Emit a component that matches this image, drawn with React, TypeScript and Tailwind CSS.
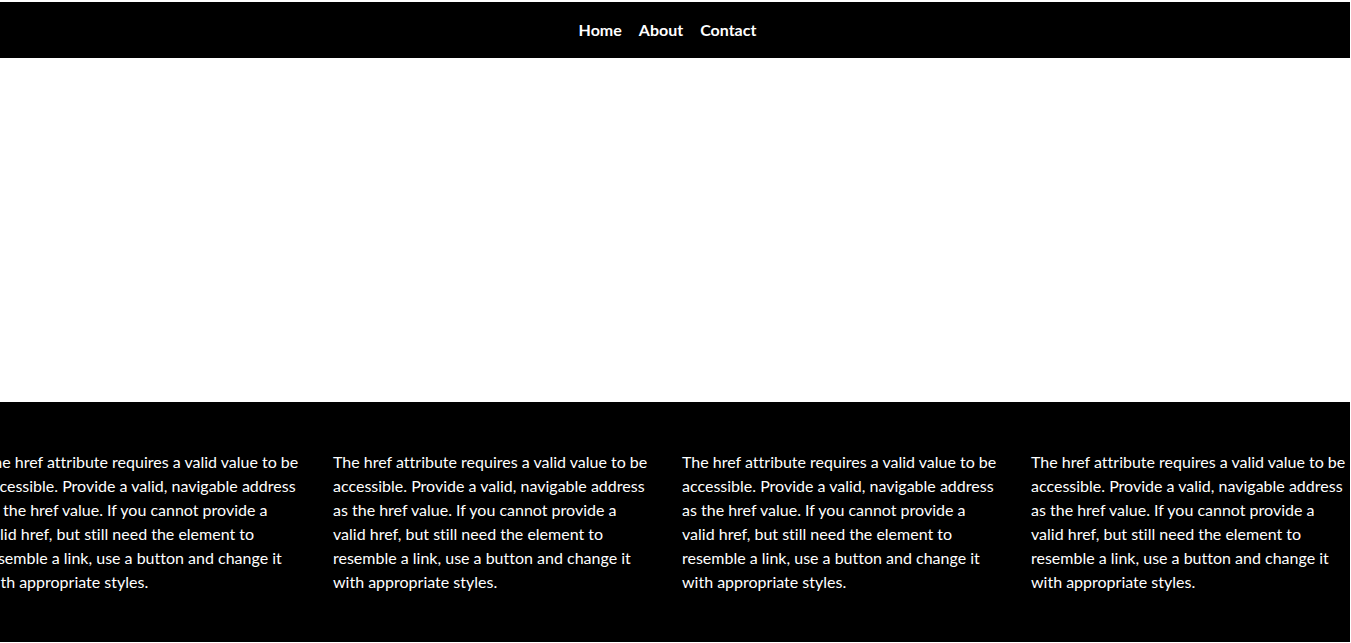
const blurb =
  "The href attribute requires a valid value to be accessible. Provide a valid, navigable address as the href value. If you cannot provide a valid href, but still need the element to resemble a link, use a button and change it with appropriate styles.";

export default function App() {
  return (
    <div className="w-[1350px] h-[643px] bg-white pt-[2px] overflow-hidden font-['Lato',sans-serif] [font-variant-ligatures:none]">
      <nav className="h-14 bg-black flex items-center justify-center gap-[17px] pr-[15px]">
        <a href="#" className="text-white font-bold text-base">Home</a>
        <a href="#" className="text-white font-bold text-base">About</a>
        <a href="#" className="text-white font-bold text-base">Contact</a>
      </nav>
      <section className="h-[344px] bg-white" />
      <footer className="h-[240px] bg-black overflow-hidden">
        <div className="flex gap-[33px] ml-[-16px] pt-[48px]">
          {[0, 1, 2, 3].map((i) => (
            <p key={i} className="w-[316px] shrink-0 text-white text-base leading-6">
              {blurb}
            </p>
          ))}
        </div>
      </footer>
    </div>
  );
}
